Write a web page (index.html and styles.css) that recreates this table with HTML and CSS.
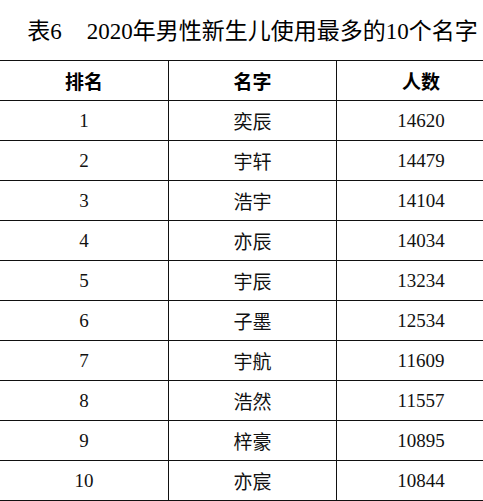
FILE: index.html
```html
<!DOCTYPE html>
<html lang="zh-CN">
<head>
<meta charset="utf-8">
<title>2020年男性新生儿使用最多的10个名字</title>
<link rel="stylesheet" href="styles.css">
</head>
<body>
<div class="page">
  <h1 class="title"><span>表6</span><span class="title-main">2020年男性新生儿使用最多的10个名字</span></h1>
  <div class="table">
    <div class="row head"><div class="cell">排名</div><div class="cell">名字</div><div class="cell">人数</div></div>
    <div class="row"><div class="cell">1</div><div class="cell">奕辰</div><div class="cell">14620</div></div>
    <div class="row"><div class="cell">2</div><div class="cell">宇轩</div><div class="cell">14479</div></div>
    <div class="row"><div class="cell">3</div><div class="cell">浩宇</div><div class="cell">14104</div></div>
    <div class="row"><div class="cell">4</div><div class="cell">亦辰</div><div class="cell">14034</div></div>
    <div class="row"><div class="cell">5</div><div class="cell">宇辰</div><div class="cell">13234</div></div>
    <div class="row"><div class="cell">6</div><div class="cell">子墨</div><div class="cell">12534</div></div>
    <div class="row"><div class="cell">7</div><div class="cell">宇航</div><div class="cell">11609</div></div>
    <div class="row"><div class="cell">8</div><div class="cell">浩然</div><div class="cell">11557</div></div>
    <div class="row"><div class="cell">9</div><div class="cell">梓豪</div><div class="cell">10895</div></div>
    <div class="row"><div class="cell">10</div><div class="cell">亦宸</div><div class="cell">10844</div></div>
  </div>
</div>
</body>
</html>
```

FILE: styles.css
```css
html, body {
  margin: 0;
  padding: 0;
  background: #fff;
}
body {
  width: 483px;
  height: 501px;
  overflow: hidden;
  font-family: "Liberation Serif", "Noto Sans CJK SC", serif;
  color: #111;
}
.page {
  width: 505px;
}
.title {
  margin: 0;
  height: 60px;
  display: flex;
  align-items: center;
  justify-content: center;
  padding-top: 2px;
  box-sizing: border-box;
  font-size: 23px;
  font-weight: normal;
  line-height: 1;
  color: #000;
}
.title-main {
  margin-left: 25px;
}
.table {
  border-top: 1px solid #111;
}
.row {
  display: grid;
  grid-template-columns: 169px 168px 168px;
  height: 40px;
  box-sizing: border-box;
  border-bottom: 1px solid #111;
}
.cell {
  display: flex;
  align-items: center;
  justify-content: center;
  font-size: 19px;
  border-right: 1px solid #111;
  box-sizing: border-box;
}
.cell:last-child {
  border-right: none;
}
.head .cell {
  font-family: "Noto Sans CJK SC", sans-serif;
  font-weight: bold;
  font-size: 19px;
  color: #000;
}
```
